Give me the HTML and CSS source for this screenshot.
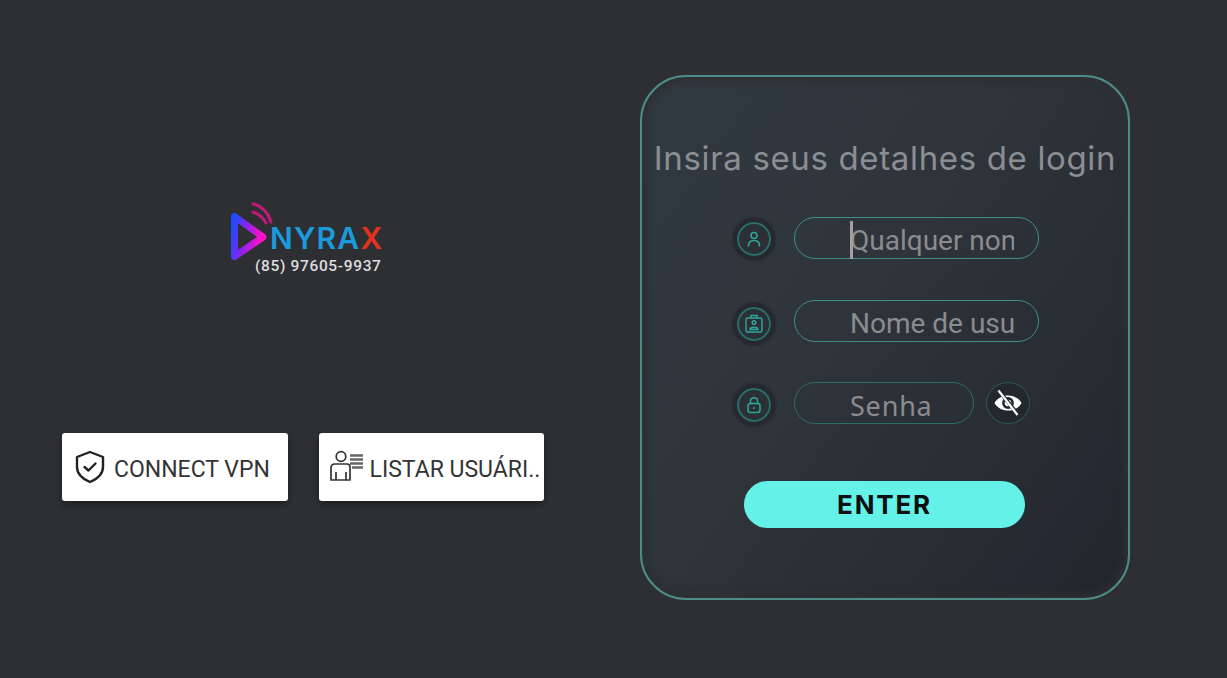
FILE: index.html
```html
<!DOCTYPE html>
<html lang="en">
<head>
  <meta charset="UTF-8">
  <title>Nyrax Login</title>
  <link rel="stylesheet" href="styles.css">
</head>
<body>

  <div class="page">

    <!-- Left side: logo and the two action buttons -->
    <div class="side">
      <div class="brand">
        <div class="brand-top">
          <svg class="brand-mark" width="44" height="60" viewBox="0 0 44 60" fill="none">
            <defs>
              <linearGradient id="playGrad" x1="0" y1="0" x2="1" y2="0.3">
                <stop offset="0" stop-color="#1b4dff"/>
                <stop offset="0.45" stop-color="#8a22f0"/>
                <stop offset="1" stop-color="#ff12c8"/>
              </linearGradient>
            </defs>
            <path d="M4.5 15.5 L33 36 L4.5 55.5 Z" stroke="url(#playGrad)" stroke-width="7" stroke-linejoin="round"/>
            <path d="M23 3 C31 5 38 11 41 21" stroke="#c4197c" stroke-width="3" stroke-linecap="round"/>
            <path d="M23 11 C29 13 33 16 36 22" stroke="#c4197c" stroke-width="3" stroke-linecap="round"/>
          </svg>
          <div class="brand-name"><span>NYRA</span><span class="brand-x">X</span></div>
        </div>
        <div class="brand-phone">(85) 97605-9937</div>
      </div>

      <div class="actions">
        <button class="action">
          <svg width="32" height="34" viewBox="0 0 32 34" fill="none" stroke="#222" stroke-width="2.4" stroke-linejoin="round" stroke-linecap="round">
            <path d="M16 2 L29 7 V17 C29 24 23 29 16 32 C9 29 3 24 3 17 V7 Z"/>
            <path d="M10.5 17 L14.5 20.5 L21.5 13.5"/>
          </svg>
          <span>CONNECT VPN</span>
        </button>
        <button class="action">
          <svg width="36" height="36" viewBox="0 0 36 36" fill="none" stroke="#333" stroke-width="1.7" stroke-linejoin="round">
            <circle cx="12" cy="7.5" r="4.8"/>
            <path d="M2 31 V19 Q2 15 6 15 H18 Q21 15 21 18 V31 Z"/>
            <path d="M7 31 V23 M17 31 V23"/>
            <path d="M21 6.5 H34 M21 10.5 H34 M21 14.5 H34 M23 18.5 H34" stroke="#666" stroke-width="2.6"/>
          </svg>
          <span>LISTAR USUÁRI..</span>
        </button>
      </div>
    </div>

    <!-- Login card -->
    <div class="card">
      <h1 class="card-title">Insira seus detalhes de login</h1>

      <div class="form-row">
        <div class="badge">
          <svg width="18" height="18" viewBox="0 0 18 18" fill="none" stroke="#2fa89c" stroke-width="1.5" stroke-linecap="round">
            <circle cx="9" cy="5.5" r="3"/>
            <path d="M3.5 16 C3.5 11.5 6 10.5 9 10.5 C12 10.5 14.5 11.5 14.5 16"/>
          </svg>
        </div>
        <div class="field field-active"><span class="field-text">Qualquer nome</span></div>
      </div>

      <div class="form-row">
        <div class="badge badge-low">
          <svg width="20" height="20" viewBox="0 0 20 20" fill="none" stroke="#2fa89c" stroke-width="1.4">
            <rect x="2" y="4" width="16" height="14" rx="1.5"/>
            <path d="M7 4 V1.5 H13 V4"/>
            <circle cx="10" cy="8.5" r="1.8"/>
            <path d="M6 15.5 C6 12.5 14 12.5 14 15.5 Z"/>
          </svg>
        </div>
        <div class="field"><span class="field-text">Nome de usuário</span></div>
      </div>

      <div class="form-row">
        <div class="badge badge-mid">
          <svg width="18" height="18" viewBox="0 0 18 18" fill="none" stroke="#2fa89c" stroke-width="1.5">
            <rect x="3" y="7.5" width="12" height="9" rx="2.5"/>
            <path d="M5.5 7.5 V5 C5.5 0.8 12.5 0.8 12.5 5 V7.5"/>
            <circle cx="9" cy="12" r="1" fill="#2fa89c" stroke="none"/>
          </svg>
        </div>
        <div class="field field-short"><span class="field-text field-pass">Senha</span></div>
        <div class="eye">
          <svg width="28" height="28" viewBox="0 0 28 28">
            <path d="M0.5 14 C6 4 22 4 27.5 14 C22 24 6 24 0.5 14 Z" fill="#fff"/>
            <circle cx="14" cy="14" r="4.6" fill="none" stroke="#23282d" stroke-width="2.6"/>
            <path d="M5.5 2.5 L24.5 26" stroke="#23282d" stroke-width="3.6"/>
            <path d="M4.5 1.5 L23.5 26" stroke="#fff" stroke-width="2.2"/>
          </svg>
        </div>
      </div>

      <button class="enter">ENTER</button>
    </div>

  </div>

</body>
</html>
```

FILE: styles.css
```css
* {
  box-sizing: border-box;
}

body {
  margin: 0;
  background-color: #2e2f33;
  font-family: 'Noto Sans', sans-serif;
}

.page {
  height: 678px;
  overflow: hidden;
  display: flex;
  justify-content: space-between;
  padding: 75px 97px 0 62px;
}

/* Left side */
.side {
  width: 482px;
  padding-top: 127px;
}

.brand {
  margin-left: 168px;
  width: 156px;
  height: 73px;
}

.brand-top {
  display: flex;
  align-items: flex-start;
  height: 54px;
}

.brand-mark {
  flex: none;
  margin-top: -1px;
}

.brand-name {
  margin: 18px 0 0 -4px;
  font-family: 'Inter', sans-serif;
  font-size: 30px;
  line-height: 36px;
  font-weight: 600;
  letter-spacing: 1.2px;
  white-space: nowrap;
  color: #1c9ade;
}

.brand-x {
  color: #e4321d;
}

.brand-phone {
  margin: 0 0 0 25px;
  font-family: 'Roboto', sans-serif;
  font-size: 15.5px;
  line-height: 20px;
  font-weight: 500;
  letter-spacing: 0.65px;
  white-space: nowrap;
  color: #dedede;
}

.actions {
  display: flex;
  gap: 31px;
  margin-top: 158px;
}

.action {
  display: flex;
  align-items: center;
  gap: 8px;
  width: 226px;
  height: 68px;
  padding: 0 0 0 12px;
  border: none;
  border-radius: 3px;
  background-color: white;
  box-shadow: 0 3px 6px rgba(0,0,0,0.35);
  font-family: 'Roboto', sans-serif;
  font-size: 23px;
  color: #333;
  white-space: nowrap;
}

.action span {
  padding-top: 5px;
}

.action + .action {
  padding-left: 10px;
  gap: 5px;
}

/* Login card */
.card {
  width: 490px;
  height: 525px;
  padding: 61px 0 0;
  border: 2px solid #4d8d87;
  border-radius: 46px;
  background: linear-gradient(125deg, #313a41 0%, #2e343a 45%, #23252d 100%);
  box-shadow: inset 0 0 6px 5px rgba(46,47,51,0.9);
}

.card-title {
  margin: 0 0 39px;
  font-family: 'Inter', sans-serif;
  font-size: 33px;
  line-height: 40px;
  font-weight: 400;
  letter-spacing: 0.65px;
  text-align: center;
  white-space: nowrap;
  color: #8b8e92;
}

.form-row {
  display: flex;
  align-items: center;
  gap: 19px;
  height: 42px;
  margin: 0 0 40.5px 91px;
}

.badge {
  flex: none;
  width: 42px;
  height: 42px;
  display: flex;
  align-items: center;
  justify-content: center;
  border-radius: 50%;
  background-color: #2a3036;
  border: 4px solid #262a30;
  box-shadow: inset 0 0 0 2px #2b6f6b, 0 0 3px rgba(0,0,0,0.4);
  transform: translateY(1px);
}

.badge-low {
  transform: translateY(3px);
}

.badge-mid {
  transform: translateY(2px);
}

.field {
  width: 245px;
  height: 42px;
  padding: 6px 24px 0 55px;
  border: 1.5px solid #3f8f89;
  border-radius: 21px;
  overflow: hidden;
  display: flex;
  align-items: center;
}

.field-short {
  width: 180px;
  border-color: #2f6b67;
  overflow: visible;
}

.field-text {
  display: block;
  width: 100%;
  font-family: 'Roboto', sans-serif;
  font-size: 28px;
  line-height: 34px;
  white-space: nowrap;
  overflow: hidden;
  color: #8a8c8e;
}

.field-active {
  overflow: visible;
}

/* Text cursor over the placeholder */
.field-active::before {
  content: '';
  flex: none;
  width: 3px;
  height: 38px;
  margin: -3px -3px 0 0;
  background-color: #a89da0;
  position: relative;
  z-index: 1;
}

.field-pass {
  font-family: 'Noto Sans', sans-serif;
  font-size: 27px;
  letter-spacing: 0.8px;
  overflow: visible;
}

.eye {
  flex: none;
  width: 44px;
  height: 42px;
  margin-left: -7px;
  display: flex;
  align-items: center;
  justify-content: center;
  border: 1.5px solid #2f5a58;
  border-radius: 50%;
  background-color: #23282d;
}

.enter {
  display: block;
  width: 281px;
  height: 47px;
  margin: 57px 0 0 102px;
  padding: 0;
  border: none;
  border-radius: 24px;
  background-color: #64f2e8;
  font-family: 'Inter', sans-serif;
  font-size: 26px;
  font-weight: 700;
  letter-spacing: 1.8px;
  color: #0b0f10;
}
```
